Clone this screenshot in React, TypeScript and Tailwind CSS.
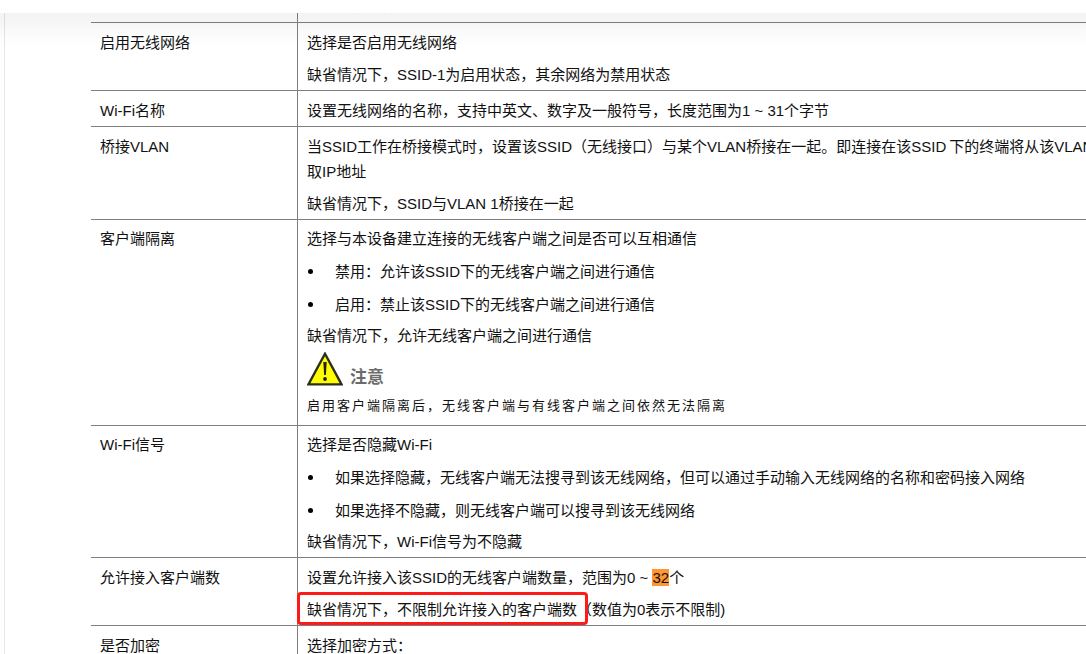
const font = { fontFamily: '"Liberation Sans", "Noto Sans CJK SC", sans-serif' };

function Row({ label, tight, bottom, children }: { label: string; tight?: boolean; bottom?: string; children: React.ReactNode }) {
  const pad = tight ? "pt-[6px]" : "pt-[7px]";
  const pb = bottom ?? "pb-[3px]";
  return (
    <div className="flex border-b border-[#808080]">
      <div className={`w-[207px] shrink-0 border-r border-[#808080] pl-[9px] ${pad} ${pb}`}>
        <p className="leading-[25px]">{label}</p>
      </div>
      <div className={`flex-1 pl-[9px] ${pad} ${pb} flex flex-col gap-[7px]`}>{children}</div>
    </div>
  );
}

function P({ children }: { children: React.ReactNode }) {
  return <p className="leading-[25px] whitespace-nowrap">{children}</p>;
}

function Bullet({ children }: { children: React.ReactNode }) {
  return (
    <div className="flex leading-[25px] items-center whitespace-nowrap mt-[1px]">
      <span className="w-[5px] h-[5px] rounded-full bg-black ml-[1px] mr-[22px]" />
      <span>{children}</span>
    </div>
  );
}

function Warning() {
  return (
    <svg width="36" height="34" viewBox="0 0 36 34" className="shrink-0">
      <path d="M18 1.8 L34.6 32.4 L1.4 32.4 Z" fill="#ffff00" stroke="#2e2e20" strokeWidth="2.4" strokeLinejoin="miter" />
      <path d="M16.3 10 h3.4 l-0.8 13 h-1.8 Z" fill="#222" />
      <circle cx="18" cy="27" r="1.9" fill="#222" />
    </svg>
  );
}

export default function App() {
  return (
    <div className="relative w-[1086px] h-[654px] overflow-hidden bg-white text-[15px] text-[#111]" style={font}>
      <div className="absolute top-0 -left-8 -right-8 h-[13px] bg-white z-10 shadow-[0_4px_32px_rgba(0,0,0,0.15)]" />
      <div className="h-full ml-[4px] border-l border-[#e6e6e6] pl-[86px] flow-root">
        <div className="w-[1400px] mt-[-14px]">
          <Row label="" bottom="pb-[4px]">
            <P>缺省情况下，</P>
          </Row>
          <Row label="启用无线网络">
            <P>选择是否启用无线网络</P>
            <P>缺省情况下，SSID-1为启用状态，其余网络为禁用状态</P>
          </Row>
          <Row label="Wi-Fi名称">
            <P>设置无线网络的名称，支持中英文、数字及一般符号，长度范围为1 ~ 31个字节</P>
          </Row>
          <Row label="桥接VLAN">
            <P>
              当SSID工作在桥接模式时，设置该SSID（无线接口）与某个VLAN桥接在一起。即连接在该SSID
              <span className="ml-[3px]">下的终端将从该VLAN获</span>
              <br />
              取IP地址
            </P>
            <P>缺省情况下，SSID与VLAN 1桥接在一起</P>
          </Row>
          <Row label="客户端隔离" tight>
            <P>选择与本设备建立连接的无线客户端之间是否可以互相通信</P>
            <Bullet>禁用：允许该SSID下的无线客户端之间进行通信</Bullet>
            <Bullet>启用：禁止该SSID下的无线客户端之间进行通信</Bullet>
            <div className="-mt-[1px]">
              <P>缺省情况下，允许无线客户端之间进行通信</P>
            </div>
            <div className="flex items-end gap-[7px] h-[34px] -mt-[3px]">
              <Warning />
              <span className="text-[17px] font-bold text-[#6b6b6b] leading-[24px] -mb-[4px]">注意</span>
            </div>
            <p className="text-[13px] tracking-[2px] leading-[25px] pb-[4px] whitespace-nowrap">
              启用客户端隔离后，无线客户端与有线客户端之间依然无法隔离
            </p>
          </Row>
          <Row label="Wi-Fi信号" tight>
            <P>选择是否隐藏Wi-Fi</P>
            <Bullet>如果选择隐藏，无线客户端无法搜寻到该无线网络，但可以通过手动输入无线网络的名称和密码接入网络</Bullet>
            <Bullet>如果选择不隐藏，则无线客户端可以搜寻到该无线网络</Bullet>
            <div className="-mt-[1px]">
              <P>缺省情况下，Wi-Fi信号为不隐藏</P>
            </div>
          </Row>
          <Row label="允许接入客户端数">
            <P>
              设置允许接入该SSID的无线客户端数量，范围为0 ~ <span className="bg-[#ff9632]">32</span>个
            </P>
            <div className="relative">
              <P>缺省情况下，不限制允许接入的客户端数（数值为0表示不限制)</P>
              <div className="absolute left-[-10px] top-[-5px] w-[291px] h-[33px] border-[3px] border-[#ff1a1a] rounded-[4px]" />
            </div>
          </Row>
          <Row label="是否加密">
            <P>选择加密方式：</P>
          </Row>
        </div>
      </div>
    </div>
  );
}
